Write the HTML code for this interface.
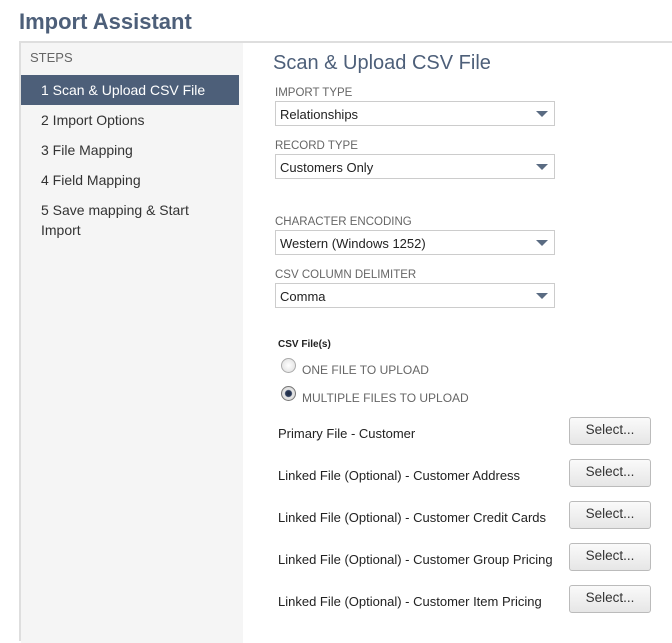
<!DOCTYPE html>
<html><head><meta charset="utf-8"><style>
*{margin:0;padding:0;box-sizing:border-box}
body{width:672px;height:635px;overflow:hidden;background:#fff;font-family:"Liberation Sans",sans-serif;position:relative;color:#222}
.a{position:absolute}
h1{position:absolute;left:19px;top:9px;font-size:22px;font-weight:bold;color:#4d5f79;letter-spacing:0}
.frame{left:19px;top:41px;width:660px;height:600px;border-top:2px solid #dedede;border-left:2px solid #dedede}
.side{left:21px;top:43px;width:222px;height:600px;background:#f5f5f5}
.steps{left:30px;top:50px;font-size:13px;color:#666}
.st{position:absolute;left:41px;font-size:14px;color:#333;line-height:20px}
.sel{left:21px;top:75px;width:218px;height:30px;background:#4d5f79}
.h2{left:273px;top:52px;font-size:20px;color:#4d5f79}
.lbl{position:absolute;left:275px;font-size:11.5px;color:#666}
.dd{position:absolute;left:275px;width:280px;height:25px;border:1px solid #ccc;font-size:13px;padding:5px 0 0 4px;color:#222}
.dd:after{content:"";position:absolute;right:6px;top:9px;border-left:6px solid transparent;border-right:6px solid transparent;border-top:6px solid #5a6b82}
.rad{position:absolute;left:281px;width:15px;height:15px;border-radius:50%;border:1px solid #aaa;background:radial-gradient(#fff,#ddd)}
.rl{position:absolute;left:302px;font-size:12px;color:#666}
.row{position:absolute;left:278px;font-size:13px;color:#222}
.btn{position:absolute;left:569px;width:82px;height:28px;border:1px solid #bbb;border-radius:3px;background:linear-gradient(#fafafa,#e6e6e6);font-size:13.5px;color:#333;text-align:center;line-height:24px}
</style></head><body>
<h1>Import Assistant</h1>
<div class="a frame"></div>
<div class="a side"></div>
<div class="a steps">STEPS</div>
<div class="a sel"></div>
<div class="st" style="top:80px;color:#fff">1 Scan &amp; Upload CSV File</div>
<div class="st" style="top:110px">2 Import Options</div>
<div class="st" style="top:140px">3 File Mapping</div>
<div class="st" style="top:170px">4 Field Mapping</div>
<div class="st" style="top:200px">5 Save mapping &amp; Start<br>Import</div>
<div class="a h2">Scan &amp; Upload CSV File</div>
<div class="lbl" style="top:87px">IMPORT TYPE</div>
<div class="dd" style="top:101px">Relationships</div>
<div class="lbl" style="top:140px">RECORD TYPE</div>
<div class="dd" style="top:154px">Customers Only</div>
<div class="lbl" style="top:216px">CHARACTER ENCODING</div>
<div class="dd" style="top:230px">Western (Windows 1252)</div>
<div class="lbl" style="top:269px">CSV COLUMN DELIMITER</div>
<div class="dd" style="top:283px">Comma</div>
<div class="a" style="left:278px;top:339px;font-size:10px;font-weight:bold">CSV File(s)</div>
<div class="rad" style="top:358px"></div>
<div class="rl" style="top:363px">ONE FILE TO UPLOAD</div>
<div class="rad" style="top:386px;border-color:#777;background:radial-gradient(#1e2a40 0,#2a3a5a 3px,#e8e8e8 4px,#ccc)"></div>
<div class="rl" style="top:391px">MULTIPLE FILES TO UPLOAD</div>
<div class="row" style="top:426px">Primary File - Customer</div>
<div class="btn" style="top:417px">Select...</div>
<div class="row" style="top:468px">Linked File (Optional) - Customer Address</div>
<div class="btn" style="top:459px">Select...</div>
<div class="row" style="top:510px">Linked File (Optional) - Customer Credit Cards</div>
<div class="btn" style="top:501px">Select...</div>
<div class="row" style="top:552px">Linked File (Optional) - Customer Group Pricing</div>
<div class="btn" style="top:543px">Select...</div>
<div class="row" style="top:594px">Linked File (Optional) - Customer Item Pricing</div>
<div class="btn" style="top:585px">Select...</div>
</body></html>
